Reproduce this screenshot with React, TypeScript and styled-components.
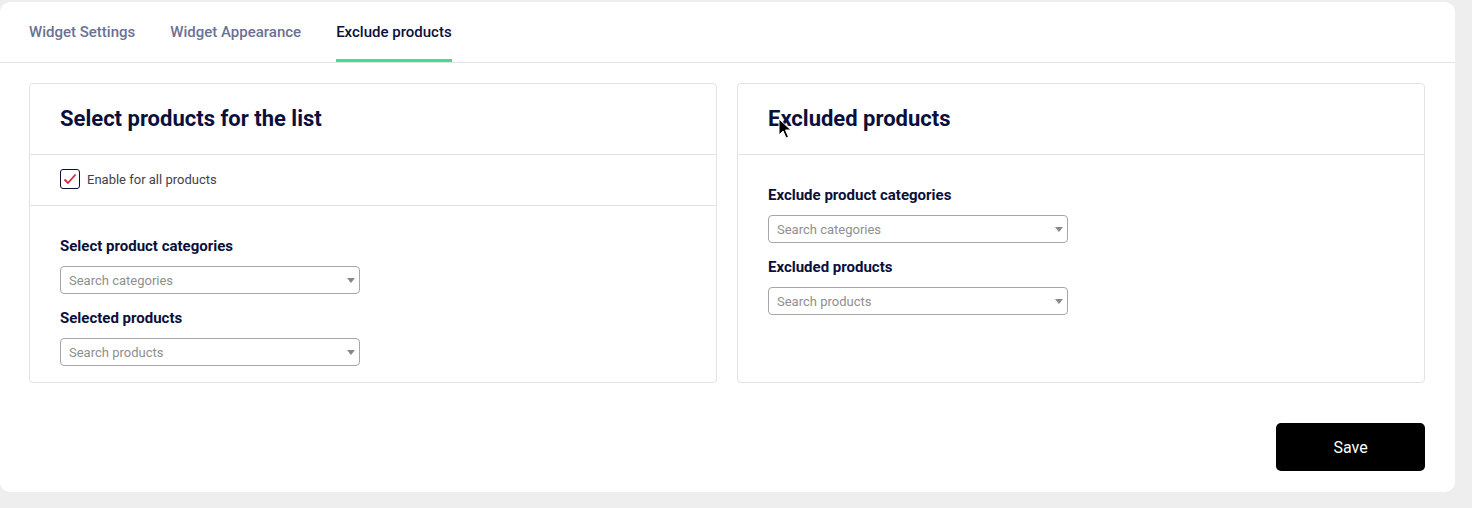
import React, { FunctionComponent } from 'react'
import styled, { createGlobalStyle } from 'styled-components'

const GlobalStyle = createGlobalStyle`
  body {
    margin: 0;
    background: #eeeeee;
    font-family: Roboto, 'Liberation Sans', sans-serif;
  }
`

const Card = styled.div`
  position: relative;
  margin-top: 2px;
  width: 1455px;
  height: 490px;
  background: #fff;
  border-radius: 10px;
  box-sizing: border-box;
`

const TabBar = styled.div`
  display: flex;
  gap: 35px;
  height: 60px;
  padding-left: 29px;
  border-bottom: 1px solid #e3e3e3;
`

const Tab = styled.div<{ $active?: boolean }>`
  display: flex;
  align-items: center;
  height: 55px;
  padding-top: 2px;
  border-bottom: 3px solid ${p => (p.$active ? '#3ddc97' : 'transparent')};
  font-size: 15px;
  font-weight: 500;
  color: ${p => (p.$active ? '#0b0f3b' : '#6b7194')};
  cursor: pointer;
`

const Body = styled.div`
  padding: 20px 30px 0 29px;
`

const Columns = styled.div`
  display: grid;
  grid-template-columns: 688px 688px;
  gap: 20px;
`

const Panel = styled.div`
  height: 300px;
  border: 1px solid #e3e3e3;
  border-radius: 4px;
  box-sizing: border-box;
`

const PanelHeader = styled.div`
  display: flex;
  align-items: center;
  height: 68px;
  padding: 0 0 2px 30px;
  border-bottom: 1px solid #e3e3e3;
`

const PanelTitle = styled.h2`
  margin: 0;
  font-size: 22px;
  font-weight: 700;
  color: #0b0f3b;
`

const CheckRow = styled.label`
  display: flex;
  align-items: center;
  gap: 7px;
  height: 48px;
  padding: 0 0 2px 30px;
  border-bottom: 1px solid #e3e3e3;
  font-size: 13px;
  color: #3c434a;
`

const Box = styled.span`
  display: flex;
  align-items: center;
  justify-content: center;
  width: 20px;
  height: 20px;
  box-sizing: border-box;
  border: 1px solid #0b0f3b;
  border-radius: 3px;
`

const Fields = styled.div`
  padding: 31px 30px 0;
`

const Field = styled.div`
  margin-bottom: 15px;
`

const FieldLabel = styled.div`
  height: 18px;
  line-height: 18px;
  margin-bottom: 11px;
  font-size: 15px;
  font-weight: 700;
  color: #0b0f3b;
`

const SelectBox = styled.div`
  display: flex;
  align-items: center;
  justify-content: space-between;
  width: 300px;
  height: 28px;
  padding: 0 4px 0 8px;
  box-sizing: border-box;
  border: 1px solid #a7a7a7;
  border-radius: 4px;
  font-size: 13px;
  color: #8f8f8f;
`

const Arrow = styled.span`
  width: 0;
  height: 0;
  border-left: 4px solid transparent;
  border-right: 4px solid transparent;
  border-top: 5px solid #888;
`

const Footer = styled.div`
  display: flex;
  justify-content: flex-end;
  padding-top: 40px;
`

const SaveButton = styled.button`
  width: 149px;
  height: 48px;
  border: 0;
  border-radius: 5px;
  background: #000;
  color: #fff;
  font-family: Roboto, 'Liberation Sans', sans-serif;
  font-size: 16px;
  cursor: pointer;
`

const Pointer = styled.svg`
  position: absolute;
  left: 778px;
  top: 116px;
  pointer-events: none;
`

const SearchSelect: FunctionComponent<{ label: string; placeholder: string }> = ({ label, placeholder }) => (
  <Field>
    <FieldLabel>{label}</FieldLabel>
    <SelectBox>
      {placeholder}
      <Arrow />
    </SelectBox>
  </Field>
)

const App: FunctionComponent = () => (
  <>
    <GlobalStyle />
    <Card>
      <TabBar>
        <Tab>Widget Settings</Tab>
        <Tab>Widget Appearance</Tab>
        <Tab $active>Exclude products</Tab>
      </TabBar>
      <Body>
        <Columns>
          <Panel>
            <PanelHeader>
              <PanelTitle>Select products for the list</PanelTitle>
            </PanelHeader>
            <CheckRow>
              <Box>
                <svg width="14" height="12" viewBox="0 0 14 12">
                  <path d="M1.5 6.5 L5 10 L12.5 1.5" fill="none" stroke="#e0243a" strokeWidth="1.8" />
                </svg>
              </Box>
              Enable for all products
            </CheckRow>
            <Fields>
              <SearchSelect label="Select product categories" placeholder="Search categories" />
              <SearchSelect label="Selected products" placeholder="Search products" />
            </Fields>
          </Panel>
          <Panel>
            <PanelHeader>
              <PanelTitle>Excluded products</PanelTitle>
            </PanelHeader>
            <Fields>
              <SearchSelect label="Exclude product categories" placeholder="Search categories" />
              <SearchSelect label="Excluded products" placeholder="Search products" />
            </Fields>
          </Panel>
        </Columns>
        <Footer>
          <SaveButton>Save</SaveButton>
        </Footer>
      </Body>
      <Pointer width="14" height="22" viewBox="0 0 14 22">
        <path d="M1 1 L1 17 L5 13 L8 20 L10.5 19 L7.5 12 L13 12 Z" fill="#000" stroke="#fff" strokeWidth="1" />
      </Pointer>
    </Card>
  </>
)

export default App
